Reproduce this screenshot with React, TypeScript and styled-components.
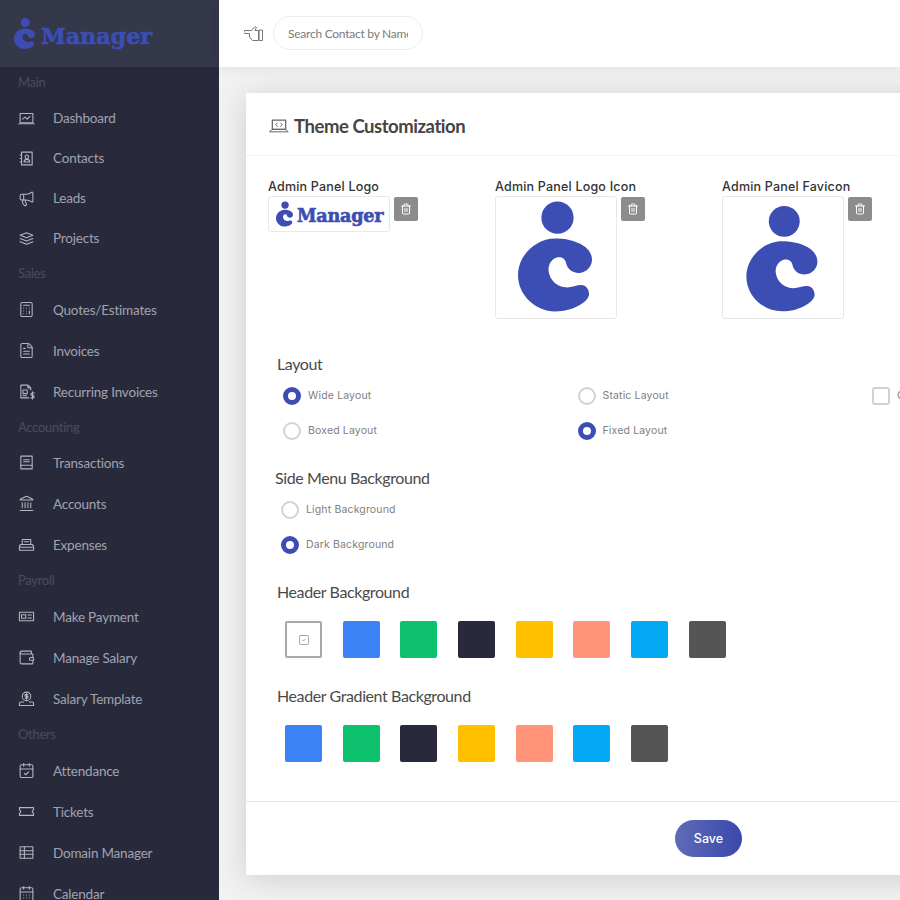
import React from "react";
import styled, { createGlobalStyle } from "styled-components";
import {
  Megaphone, Calculator, FileText, Landmark, Wallet, CalendarCheck, CalendarDays, Trash2, SquareCheck,
} from "lucide-react";

const Global = createGlobalStyle`
  html, body { margin: 0; padding: 0; height: 900px; overflow: hidden; background: #f2f2f2; }
  * { box-sizing: border-box; }
`;

const dosis = `"Lato", "Noto Sans", sans-serif`;
const poppins = `"Inter", "Noto Sans", sans-serif`;
const brand = "#3c4eb4";

const Page = styled.div`
  display: flex;
  width: 900px;
  height: 900px;
  overflow: hidden;
`;
const Sidebar = styled.aside`
  flex: 0 0 219px;
  height: 900px;
  overflow: hidden;
  background: #282a3c;
  font-family: ${dosis};
`;
const Brand = styled.div`
  display: flex;
  align-items: center;
  gap: 6px;
  height: 67px;
  padding-left: 14px;
  background: #35374a;
`;
const Wordmark = styled.span<{ $size: number; $drop: number }>`
  margin-top: ${(p) => p.$drop}px;
  font-family: "DejaVu Serif", serif;
  font-weight: 700;
  font-size: ${(p) => p.$size}px;
  letter-spacing: -0.2px;
  color: ${brand};
  -webkit-text-stroke: 0.6px ${brand};
  line-height: 1;
`;
const SectionLabel = styled.div<{ $h: number }>`
  height: ${(p) => p.$h}px;
  padding-left: 18px;
  font-size: 13px;
  letter-spacing: -0.3px;
  line-height: 31px;
  color: #4a4c5e;
`;
const Row = styled.div<{ $h: number }>`
  display: flex;
  align-items: center;
  height: ${(p) => p.$h}px;
  padding-left: 18px;
  color: #a0a2b0;
  font-size: 13.5px;
  letter-spacing: -0.2px;
  svg { flex: 0 0 17px; color: #b4b6c2; }
`;
const RowText = styled.span`
  margin-left: 18px;
`;
const Main = styled.main`
  flex: 1;
  min-width: 0;
  display: flex;
  flex-direction: column;
  background: #f2f2f2;
`;
const Topbar = styled.header`
  flex: 0 0 67px;
  display: flex;
  align-items: center;
  gap: 9px;
  padding: 0 0 1px 25px;
  background: #fff;
  box-shadow: 0 0 14px rgba(0, 0, 0, 0.09);
  position: relative;
  z-index: 1;
  svg { color: #777; }
`;
const Search = styled.input`
  width: 150px;
  height: 34px;
  border: 1px solid #eeeeee;
  border-radius: 17px;
  padding: 0 14px;
  outline: none;
  background: #fff;
  font-family: ${dosis};
  font-size: 12px;
  letter-spacing: -0.25px;
  &::placeholder { color: #7b7b7b; opacity: 1; }
`;
const Content = styled.div`
  padding: 26px 0 0 27px;
`;
const Card = styled.section`
  width: 900px;
  height: 782px;
  display: flex;
  flex-direction: column;
  background: #fff;
  box-shadow: 0 4px 30px rgba(0, 0, 0, 0.15);
`;
const CardHead = styled.div`
  flex: 0 0 63px;
  display: flex;
  align-items: center;
  gap: 5px;
  padding: 4px 0 0 23px;
  border-bottom: 1px solid #f2f2f2;
  color: #666;
`;
const Title = styled.h1`
  margin: 0;
  font-family: ${dosis};
  font-size: 18.5px;
  letter-spacing: -0.45px;
  font-weight: 700;
  color: #444;
`;
const CardBody = styled.div`
  flex: 1;
  padding: 21px 0 0 22px;
`;
const UploadGrid = styled.div`
  display: grid;
  grid-template-columns: repeat(3, 227px);
  height: 175px;
`;
const UploadLabel = styled.div`
  font-family: ${poppins};
  font-size: 12.5px;
  font-weight: 450;
  letter-spacing: 0.2px;
  line-height: 19px;
  color: #333;
`;
const UploadRow = styled.div`
  display: flex;
  align-items: flex-start;
  gap: 4px;
`;
const Thumb = styled.div<{ $tall?: boolean }>`
  width: 122px;
  height: ${(p) => (p.$tall ? 123 : 36)}px;
  border: 1px solid #e8e8e8;
  border-radius: 3px;
  background: #fff;
  display: flex;
  align-items: center;
  gap: 4px;
  padding: ${(p) => (p.$tall ? 0 : "0 0 0 7px")};
`;
const TrashButton = styled.button`
  width: 24px;
  height: 24px;
  margin-top: 1px;
  padding: 0;
  border: 0;
  border-radius: 2px;
  background: #8c8c8c;
  color: #fff;
  display: flex;
  align-items: center;
  justify-content: center;
`;
const GroupTitle = styled.h2<{ $left: number }>`
  margin: 0;
  padding-left: ${(p) => p.$left}px;
  font-family: ${dosis};
  font-weight: 400;
  font-size: 16px;
  letter-spacing: -0.4px;
  line-height: 24px;
  color: #4a4a4a;
`;
const OptionGrid = styled.div<{ $left: number }>`
  display: grid;
  grid-template-columns: repeat(3, 294.5px);
  grid-auto-rows: 35px;
  margin-top: 2px;
  padding-left: ${(p) => p.$left}px;
`;
const Option = styled.label`
  display: flex;
  align-items: center;
  gap: 7px;
  font-family: ${poppins};
  font-size: 10.5px;
  letter-spacing: 0.15px;
  color: #808080;
  white-space: nowrap;
`;
const Radio = styled.span<{ $on?: boolean }>`
  width: 18px;
  height: 18px;
  border-radius: 50%;
  flex: none;
  background: #fff;
  border: ${(p) => (p.$on ? `5px solid ${brand}` : "2px solid #d2d2d2")};
`;
const Check = styled.span`
  width: 18px;
  height: 18px;
  flex: none;
  border-radius: 3px;
  border: 2px solid #d2d2d2;
  background: #fff;
`;
const Swatches = styled.div`
  display: flex;
  gap: 20.7px;
  margin: 17px 0 0 17px;
  height: 37px;
`;
const Swatch = styled.div<{ $c?: string }>`
  width: 37px;
  height: 37px;
  border-radius: 2px;
  background: ${(p) => p.$c || "#fff"};
  border: ${(p) => (p.$c ? "0" : "2px solid #a9a9a9")};
  display: flex;
  align-items: center;
  justify-content: center;
  color: #777;
`;
const Spacer = styled.div<{ $h: number }>`
  height: ${(p) => p.$h}px;
`;
const Footer = styled.div`
  flex: 0 0 74px;
  border-top: 1px solid #e8e8e8;
  padding: 18px 0 0 429px;
`;
const SaveButton = styled.button`
  width: 67px;
  height: 37px;
  border: 0;
  border-radius: 19px;
  background: linear-gradient(90deg, #5f6cb9, #3948ab);
  color: #fff;
  font-family: ${poppins};
  font-size: 12.5px;
  font-weight: 500;
`;

const Mark = ({ size, h, box }: { size: number; h?: number; box: string }) => (
  <svg width={size} height={h ?? size} viewBox={box} fill={brand} style={{ flex: "none", display: "block" }}>
    <circle cx="232" cy="140" r="49" />
    <path d="M225 203C280 203 337 225 337 268C337 290 318 308 297 308C275 308 262 295 258 278C255 262 240 258 228 262C212 268 203 285 205 302C208 330 232 352 262 352C275 352 290 345 305 345C318 345 328 358 328 372C328 395 280 425 225 425C165 425 112 375 112 315C112 255 165 203 225 203Z" />
  </svg>
);

const Glyph = ({ children, size = 17 }: { children: React.ReactNode; size?: number }) => (
  <svg width={size} height={size} viewBox="0 0 24 24" fill="none" stroke="currentColor" strokeWidth={1.5} strokeLinecap="round" strokeLinejoin="round">
    {children}
  </svg>
);
const HandLeft = () => (
  <svg width="20" height="17" viewBox="0 0 20 17" fill="none" stroke="currentColor" strokeWidth="1" strokeLinejoin="round" strokeLinecap="round">
    <path d="M1 5.500h6.500L11 1.500l1.500 1-1.500 3h3.500v10H8.500L5.500 12V8.500H2A1.500 1.500 0 0 1 1 5.500z" />
    <path d="M15.500 5h3v10.500h-3z" />
  </svg>
);

const I = { size: 17, strokeWidth: 1.5 };
const menu: { label: string; lh: number; h: number; items: [string, React.ReactNode][] }[] = [
  { label: "Main", lh: 31, h: 40, items: [
    ["Dashboard", <Glyph><rect x="3" y="5" width="18" height="13" /><path d="M6.500 13l3.500-3 3 3 4-4M1 19.500h22" /></Glyph>],
    ["Contacts", <Glyph><rect x="5" y="3" width="15" height="18" /><circle cx="12.500" cy="9.500" r="2.500" /><path d="M8.500 17c0-5 8-5 8 0zM3 7h2M3 12h2M3 17h2" /></Glyph>],
    ["Leads", <Megaphone {...I} />],
    ["Projects", <Glyph><path d="M12 4l9 3.500-9 3.500-9-3.500zM3 12l9 3.500 9-3.500M3 16.500L12 20l9-3.500" /></Glyph>],
  ] },
  { label: "Sales", lh: 31, h: 41, items: [
    ["Quotes/Estimates", <Calculator {...I} />],
    ["Invoices", <FileText {...I} />],
    ["Recurring Invoices", <Glyph><path d="M14 3H4v18h11M14 3l4 4v3M14 3v4h4M7 10h6v5H7zM7 18h5" /><path d="M23 14h-3a1.500 1.500 0 0 0 0 3.500h1a1.500 1.500 0 0 1 0 3.500h-3M20.500 12.500v10" /></Glyph>],
  ] },
  { label: "Accounting", lh: 30, h: 41, items: [
    ["Transactions", <Glyph><rect x="4" y="3" width="16" height="18" /><path d="M8 8h8M8 11h8M4 16h16" /></Glyph>],
    ["Accounts", <Landmark {...I} />],
    ["Expenses", <Glyph><path d="M6 12V5h12v7M2 20v-6l2-2h16l2 2v6zM2 16h20M9 8h6" /></Glyph>],
  ] },
  { label: "Payroll", lh: 31, h: 41, items: [
    ["Make Payment", <Glyph><rect x="2" y="6" width="20" height="12" /><path d="M5 9.500h6v5H5zM14 10h5M14 14h5" /></Glyph>],
    ["Manage Salary", <Wallet {...I} />],
    ["Salary Template", <Glyph><circle cx="12" cy="9" r="6" /><path d="M14 6.500h-3a1.200 1.200 0 0 0 0 2.500h2a1.200 1.200 0 0 1 0 2.500h-3M12 5v8M2 22v-3a2 2 0 0 1 2-2h4M22 22v-3a2 2 0 0 0-2-2h-4M2 22h20" /></Glyph>],
  ] },
  { label: "Others", lh: 31, h: 41, items: [
    ["Attendance", <CalendarCheck {...I} />],
    ["Tickets", <Glyph><path d="M2 6.500h20v3.500a2 2 0 0 0 0 4v3.500H2V14a2 2 0 0 0 0-4z" /></Glyph>],
    ["Domain Manager", <Glyph><rect x="3" y="4" width="18" height="16" /><path d="M3 9.500h18M3 14.500h18M9 4v16" /></Glyph>],
    ["Calendar", <CalendarDays {...I} />],
  ] },
];
const solid = ["#3b82f6", "#0cc06c", "#282a3c", "#ffc000", "#ff9478", "#03a9f4", "#555555"];

export default function App() {
  return (
    <Page>
      <Global />
      <Sidebar>
        <Brand>
          <Mark size={21} h={31} box="112 91 225 334" />
          <Wordmark $size={22.5} $drop={6}>Manager</Wordmark>
        </Brand>
        {menu.map((g) => (
          <div key={g.label}>
            <SectionLabel $h={g.lh}>{g.label}</SectionLabel>
            {g.items.map(([t, icon]) => (
              <Row key={t} $h={g.h}>{icon}<RowText>{t}</RowText></Row>
            ))}
          </div>
        ))}
      </Sidebar>
      <Main>
        <Topbar>
          <HandLeft />
          <Search placeholder="Search Contact by Name ..." />
        </Topbar>
        <Content>
          <Card>
            <CardHead>
              <Glyph size={20}>
                <rect x="4" y="5" width="16" height="11" />
                <path d="M1 19h22l-3-3H4zM10 8.500l-2 2 2 2M14 8.500l2 2-2 2" strokeWidth={1.2} />
              </Glyph>
              <Title>Theme Customization</Title>
            </CardHead>
            <CardBody>
              <UploadGrid>
                <div>
                  <UploadLabel>Admin Panel Logo</UploadLabel>
                  <UploadRow>
                    <Thumb>
                      <Mark size={17} h={26} box="112 91 225 334" />
                      <Wordmark $size={17.6} $drop={4}>Manager</Wordmark>
                    </Thumb>
                    <TrashButton><Trash2 size={12} /></TrashButton>
                  </UploadRow>
                </div>
                <div>
                  <UploadLabel>Admin Panel Logo Icon</UploadLabel>
                  <UploadRow>
                    <Thumb $tall><Mark size={120} box="45 80 365 365" /></Thumb>
                    <TrashButton><Trash2 size={12} /></TrashButton>
                  </UploadRow>
                </div>
                <div>
                  <UploadLabel>Admin Panel Favicon</UploadLabel>
                  <UploadRow>
                    <Thumb $tall><Mark size={120} box="38 66 380 380" /></Thumb>
                    <TrashButton><Trash2 size={12} /></TrashButton>
                  </UploadRow>
                </div>
              </UploadGrid>
              <GroupTitle $left={9}>Layout</GroupTitle>
              <OptionGrid $left={15}>
                <Option><Radio $on />Wide Layout</Option>
                <Option><Radio />Static Layout</Option>
                <Option><Check />Collapsed Menu</Option>
                <Option><Radio />Boxed Layout</Option>
                <Option><Radio $on />Fixed Layout</Option>
              </OptionGrid>
              <Spacer $h={18} />
              <GroupTitle $left={7}>Side Menu Background</GroupTitle>
              <OptionGrid $left={13}>
                <Option><Radio />Light Background</Option>
                <span />
                <span />
                <Option><Radio $on />Dark Background</Option>
              </OptionGrid>
              <Spacer $h={18} />
              <GroupTitle $left={9}>Header Background</GroupTitle>
              <Swatches>
                <Swatch><SquareCheck size={12} strokeWidth={1.3} /></Swatch>
                {solid.map((c) => <Swatch key={c} $c={c} />)}
              </Swatches>
              <Spacer $h={26} />
              <GroupTitle $left={9}>Header Gradient Background</GroupTitle>
              <Swatches>
                {solid.map((c) => <Swatch key={c} $c={c} />)}
              </Swatches>
            </CardBody>
            <Footer><SaveButton>Save</SaveButton></Footer>
          </Card>
        </Content>
      </Main>
    </Page>
  );
}
